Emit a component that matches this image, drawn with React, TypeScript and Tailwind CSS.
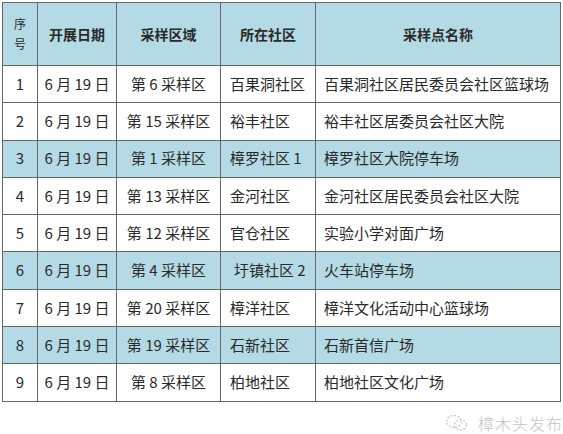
import React from 'react';

// 采样点一览表 — static table screenshot
interface Row {
  no: number;
  date: string;
  area: string;
  community: string;
  site: string;
  hi?: boolean;
}

const ROWS: Row[] = [
  { no: 1, date: '6 月 19 日', area: '第 6 采样区', community: '百果洞社区', site: '百果洞社区居民委员会社区篮球场' },
  { no: 2, date: '6 月 19 日', area: '第 15 采样区', community: '裕丰社区', site: '裕丰社区居委员会社区大院' },
  { no: 3, date: '6 月 19 日', area: '第 1 采样区', community: '樟罗社区 1', site: '樟罗社区大院停车场', hi: true },
  { no: 4, date: '6 月 19 日', area: '第 13 采样区', community: '金河社区', site: '金河社区居民委员会社区大院' },
  { no: 5, date: '6 月 19 日', area: '第 12 采样区', community: '官仓社区', site: '实验小学对面广场' },
  { no: 6, date: '6 月 19 日', area: '第 4 采样区', community: '圩镇社区 2', site: '火车站停车场', hi: true },
  { no: 7, date: '6 月 19 日', area: '第 20 采样区', community: '樟洋社区', site: '樟洋文化活动中心篮球场' },
  { no: 8, date: '6 月 19 日', area: '第 19 采样区', community: '石新社区', site: '石新首信广场', hi: true },
  { no: 9, date: '6 月 19 日', area: '第 8 采样区', community: '柏地社区', site: '柏地社区文化广场' },
];

const FONT = { fontFamily: '"Noto Sans CJK SC", "Noto Sans", sans-serif' };

export default function App() {
  return (
    <div className="relative h-[434px] w-[563px] bg-white" style={FONT}>
      <div className="pl-[2px] pt-[2px]">
        <table className="w-[558px] table-fixed border-collapse border-[1.5px] border-[#444] text-[#2a2a2a]">
          <colgroup>
            <col className="w-[35px]" />
            <col className="w-[79px]" />
            <col className="w-[104px]" />
            <col className="w-[95px]" />
            <col className="w-[245px]" />
          </colgroup>
          <thead>
            <tr className="h-[63px] bg-[#b4dbe5]">
              <th className="border border-[#666] text-center text-[12px] font-normal leading-[20px]">
                序<br />号
              </th>
              <th className="border border-[#666] text-center text-[14px] font-semibold">开展日期</th>
              <th className="border border-[#666] text-center text-[14px] font-semibold">采样区域</th>
              <th className="border border-[#666] text-center text-[14px] font-semibold">所在社区</th>
              <th className="border border-[#666] text-center text-[14px] font-semibold">采样点名称</th>
            </tr>
          </thead>
          <tbody className="text-[15px]">
            {ROWS.map((r) => (
              <tr key={r.no} className={`h-[37.3px] ${r.hi ? 'bg-[#b4dbe5]' : 'bg-white'}`}>
                <td className="border border-[#666] text-center">{r.no}</td>
                <td className="border border-[#666] text-center">{r.date}</td>
                <td className="border border-[#666] text-center">{r.area}</td>
                <td className={`border border-[#666] ${r.no === 6 ? 'pl-[13px]' : 'pl-[9px]'}`}>{r.community}</td>
                <td className="border border-[#666] pl-[8px]">{r.site}</td>
              </tr>
            ))}
          </tbody>
        </table>
      </div>

      {/* watermark */}
      <div className="absolute left-[445px] top-[411px] flex items-center gap-[9px] text-[#c4c4c4]">
        <svg width="24" height="18" viewBox="0 0 24 18" fill="none" stroke="#c8c8c8" strokeWidth="1.3" strokeDasharray="2 1.5">
          <ellipse cx="9" cy="7.5" rx="7.5" ry="6" />
          <ellipse cx="15.5" cy="11" rx="6" ry="5" />
        </svg>
        <span className="text-[16px] font-light tracking-[1px]">樟木头发布</span>
      </div>
    </div>
  );
}
